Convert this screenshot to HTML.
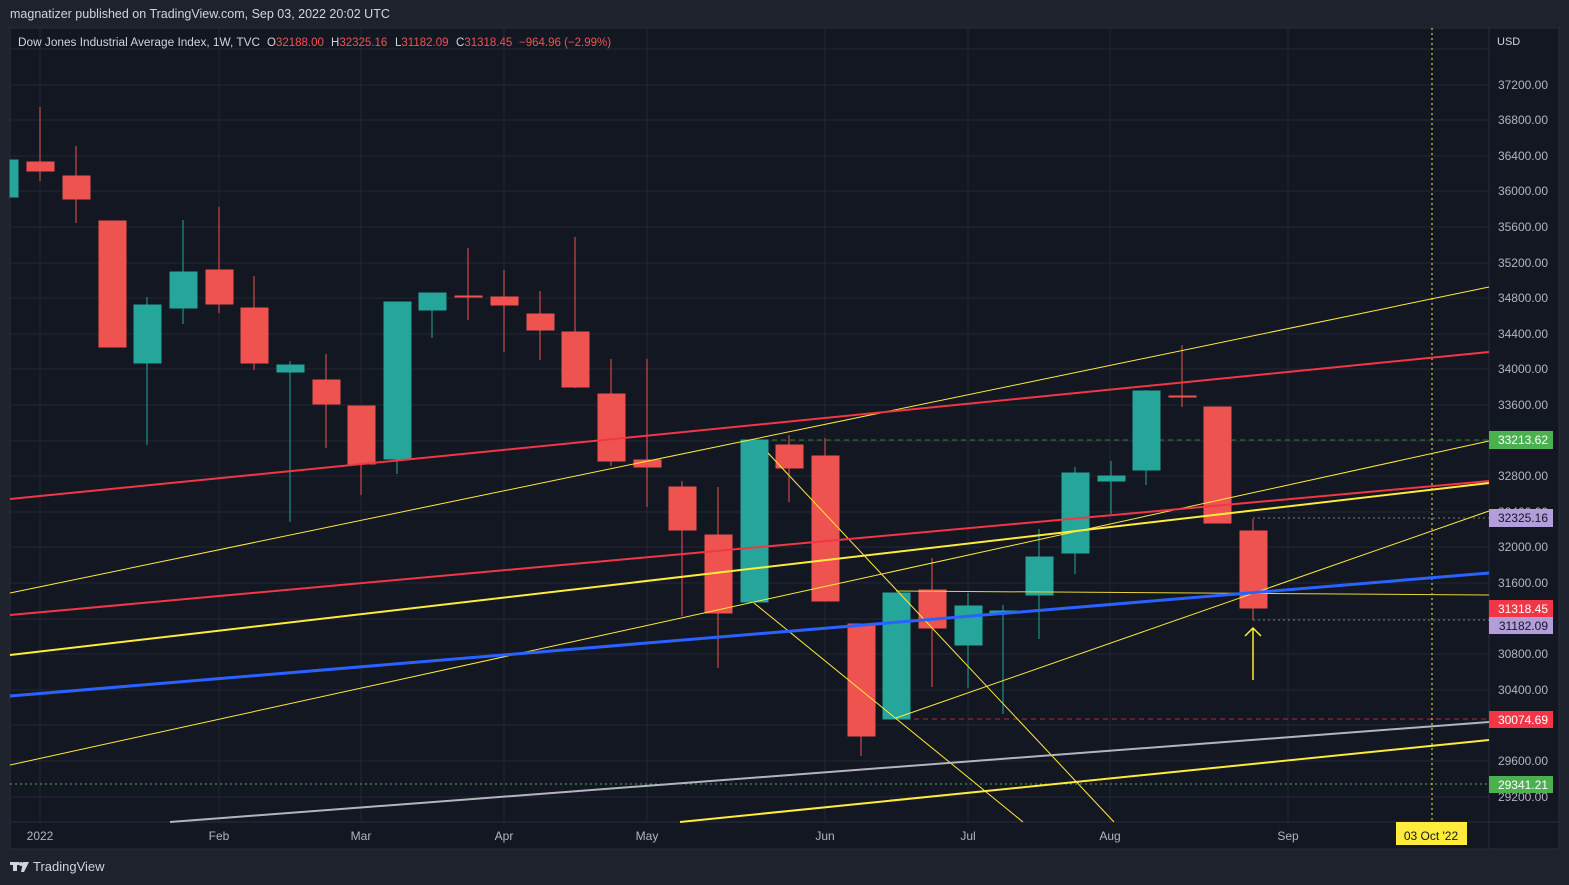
<!DOCTYPE html>
<html><head><meta charset="utf-8"><style>
body{margin:0;width:1569px;height:885px;background:#1e222d;overflow:hidden;font-family:"Liberation Sans",sans-serif;position:relative}
.t{position:absolute;color:#d1d4dc;font-size:12px;white-space:nowrap}
</style></head><body>
<div class="t" style="left:10px;top:7px;font-size:12.5px">magnatizer published on TradingView.com, Sep 03, 2022 20:02 UTC</div>
<svg width="1569" height="885" style="position:absolute;left:0;top:0" font-family="Liberation Sans, sans-serif">
<rect x="10" y="28" width="1549" height="821" fill="#131722" stroke="#2a2e39"/>
<g stroke="#232733" stroke-width="1">
<line x1="10" x2="1489" y1="49" y2="49"/><line x1="10" x2="1489" y1="85" y2="85"/><line x1="10" x2="1489" y1="120" y2="120"/><line x1="10" x2="1489" y1="156" y2="156"/><line x1="10" x2="1489" y1="191" y2="191"/><line x1="10" x2="1489" y1="227" y2="227"/><line x1="10" x2="1489" y1="263" y2="263"/><line x1="10" x2="1489" y1="298" y2="298"/><line x1="10" x2="1489" y1="334" y2="334"/><line x1="10" x2="1489" y1="369" y2="369"/><line x1="10" x2="1489" y1="405" y2="405"/><line x1="10" x2="1489" y1="441" y2="441"/><line x1="10" x2="1489" y1="476" y2="476"/><line x1="10" x2="1489" y1="512" y2="512"/><line x1="10" x2="1489" y1="547" y2="547"/><line x1="10" x2="1489" y1="583" y2="583"/><line x1="10" x2="1489" y1="619" y2="619"/><line x1="10" x2="1489" y1="654" y2="654"/><line x1="10" x2="1489" y1="690" y2="690"/><line x1="10" x2="1489" y1="725" y2="725"/><line x1="10" x2="1489" y1="761" y2="761"/><line x1="10" x2="1489" y1="797" y2="797"/>
<line y1="28" y2="822" x1="40" x2="40"/><line y1="28" y2="822" x1="219" x2="219"/><line y1="28" y2="822" x1="361" x2="361"/><line y1="28" y2="822" x1="504" x2="504"/><line y1="28" y2="822" x1="647" x2="647"/><line y1="28" y2="822" x1="825" x2="825"/><line y1="28" y2="822" x1="968" x2="968"/><line y1="28" y2="822" x1="1110" x2="1110"/><line y1="28" y2="822" x1="1288" x2="1288"/>
</g>
<line x1="10" x2="1559" y1="822" y2="822" stroke="#2a2e39"/>
<line x1="1489" x2="1489" y1="28" y2="849" stroke="#2a2e39"/>
<line x1="754" x2="1489" y1="440" y2="440" stroke="#2e7d32" stroke-dasharray="5,4"/>
<line x1="896" x2="1489" y1="719" y2="719" stroke="#b22833" stroke-dasharray="5,4"/>
<line x1="1253" x2="1489" y1="518" y2="518" stroke="#787b86" stroke-dasharray="2,3"/>
<line x1="1253" x2="1489" y1="620" y2="620" stroke="#787b86" stroke-dasharray="2,3"/>
<line x1="10" x2="1489" y1="784" y2="784" stroke="#4caf50" stroke-dasharray="2,3"/>
<line x1="1432" x2="1432" y1="28" y2="822" stroke="#ffeb3b" stroke-dasharray="2,3"/>
<g stroke-width="1">
<g fill="#26a69a" stroke="#26a69a">
<rect x="10" y="160" width="8" height="37"/>
<line x1="147" x2="147" y1="297" y2="445"/><rect x="134" y="305" width="27" height="58"/>
<line x1="183" x2="183" y1="220" y2="324"/><rect x="170" y="272" width="27" height="36"/>
<line x1="290" x2="290" y1="361" y2="522"/><rect x="277" y="365" width="27" height="7"/>
<line x1="397" x2="397" y1="459" y2="474"/><rect x="384" y="302" width="27" height="157"/>
<line x1="432" x2="432" y1="293" y2="338"/><rect x="419" y="293" width="27" height="17"/>
<rect x="741" y="440" width="27" height="162"/>
<rect x="883" y="593" width="27" height="126"/>
<line x1="968" x2="968" y1="593" y2="688"/><rect x="955" y="606" width="27" height="39"/>
<line x1="1003" x2="1003" y1="605" y2="714"/><rect x="990" y="611" width="27" height="2"/>
<line x1="1039" x2="1039" y1="529" y2="639"/><rect x="1026" y="557" width="27" height="38"/>
<line x1="1075" x2="1075" y1="467" y2="574"/><rect x="1062" y="473" width="27" height="80"/>
<line x1="1111" x2="1111" y1="461" y2="514"/><rect x="1098" y="476" width="27" height="5"/>
<line x1="1146" x2="1146" y1="390" y2="485"/><rect x="1133" y="391" width="27" height="79"/>
</g>
<g fill="#ef5350" stroke="#ef5350">
<line x1="40" x2="40" y1="107" y2="181"/><rect x="27" y="162" width="27" height="9"/>
<line x1="76" x2="76" y1="146" y2="223"/><rect x="63" y="176" width="27" height="23"/>
<line x1="112" x2="112" y1="221" y2="347"/><rect x="99" y="221" width="27" height="126"/>
<line x1="219" x2="219" y1="207" y2="313"/><rect x="206" y="270" width="27" height="34"/>
<line x1="254" x2="254" y1="276" y2="370"/><rect x="241" y="308" width="27" height="55"/>
<line x1="326" x2="326" y1="354" y2="448"/><rect x="313" y="380" width="27" height="24"/>
<line x1="361" x2="361" y1="406" y2="495"/><rect x="348" y="406" width="27" height="58"/>
<line x1="468" x2="468" y1="248" y2="320"/><rect x="455" y="296" width="27" height="1"/>
<line x1="504" x2="504" y1="270" y2="352"/><rect x="491" y="297" width="27" height="8"/>
<line x1="540" x2="540" y1="291" y2="360"/><rect x="527" y="314" width="27" height="16"/>
<line x1="575" x2="575" y1="237" y2="388"/><rect x="562" y="332" width="27" height="55"/>
<line x1="611" x2="611" y1="359" y2="466"/><rect x="598" y="394" width="27" height="67"/>
<line x1="647" x2="647" y1="359" y2="507"/><rect x="634" y="460" width="27" height="7"/>
<line x1="682" x2="682" y1="481" y2="616"/><rect x="669" y="487" width="27" height="43"/>
<line x1="718" x2="718" y1="487" y2="668"/><rect x="705" y="535" width="27" height="78"/>
<line x1="789" x2="789" y1="435" y2="502"/><rect x="776" y="445" width="27" height="23"/>
<line x1="825" x2="825" y1="438" y2="601"/><rect x="812" y="456" width="27" height="145"/>
<line x1="861" x2="861" y1="736" y2="756"/><rect x="848" y="624" width="27" height="112"/>
<line x1="932" x2="932" y1="558" y2="687"/><rect x="919" y="590" width="27" height="38"/>
<line x1="1182" x2="1182" y1="345" y2="407"/><rect x="1169" y="396" width="27" height="1"/>
<rect x="1204" y="407" width="27" height="116"/>
<line x1="1253" x2="1253" y1="519" y2="620"/><rect x="1240" y="531" width="27" height="77"/>
</g></g>
<g fill="none">
<line x1="10" y1="593" x2="1489" y2="287" stroke="#ffeb3b" stroke-width="1"/>
<line x1="10" y1="765" x2="1489" y2="441" stroke="#ffeb3b" stroke-width="1"/>
<line x1="896" y1="718" x2="1489" y2="511" stroke="#ffeb3b" stroke-width="1"/>
<line x1="896" y1="591" x2="1489" y2="595" stroke="#e8d33a" stroke-width="1"/>
<line x1="768" y1="453" x2="1114" y2="822" stroke="#ffeb3b" stroke-width="1"/>
<line x1="754" y1="603" x2="1023" y2="822" stroke="#ffeb3b" stroke-width="1"/>
<line x1="10" y1="499" x2="1489" y2="352" stroke="#f23645" stroke-width="2"/>
<line x1="10" y1="615" x2="1489" y2="481" stroke="#f23645" stroke-width="2"/>
<line x1="10" y1="655" x2="1489" y2="483" stroke="#ffeb3b" stroke-width="2"/>
<line x1="10" y1="696" x2="1489" y2="573" stroke="#2962ff" stroke-width="3"/>
<line x1="170" y1="822" x2="1489" y2="722" stroke="#b2b5be" stroke-width="2"/>
<line x1="680" y1="822" x2="1489" y2="740" stroke="#ffeb3b" stroke-width="2"/>
<path d="M1253 680V628M1245 636l8-8 8 8" stroke="#ffeb3b" stroke-width="1.5"/>
</g>
<g fill="#b2b5be" font-size="12" text-anchor="end">
<text x="1548" y="89">37200.00</text><text x="1548" y="124">36800.00</text><text x="1548" y="160">36400.00</text><text x="1548" y="195">36000.00</text><text x="1548" y="231">35600.00</text><text x="1548" y="267">35200.00</text><text x="1548" y="302">34800.00</text><text x="1548" y="338">34400.00</text><text x="1548" y="373">34000.00</text><text x="1548" y="409">33600.00</text><text x="1548" y="480">32800.00</text><text x="1548" y="516">32400.00</text><text x="1548" y="551">32000.00</text><text x="1548" y="587">31600.00</text><text x="1548" y="658">30800.00</text><text x="1548" y="694">30400.00</text><text x="1548" y="765">29600.00</text><text x="1548" y="801">29200.00</text>
</g>
<rect x="1490" y="30" width="66" height="22" fill="#131722"/>
<text x="1497" y="45" fill="#d1d4dc" font-size="11">USD</text>
<g font-size="12" text-anchor="end">
<rect x="1489" y="431" width="64" height="18" fill="#4caf50"/><text x="1548" y="444" fill="#fff">33213.62</text>
<rect x="1489" y="509" width="64" height="18" fill="#b39ddb"/><text x="1548" y="522" fill="#131722">32325.16</text>
<rect x="1489" y="600" width="64" height="17" fill="#f23645"/><text x="1548" y="613" fill="#fff">31318.45</text>
<rect x="1489" y="617" width="64" height="17" fill="#b39ddb"/><text x="1548" y="630" fill="#131722">31182.09</text>
<rect x="1489" y="711" width="64" height="17" fill="#f23645"/><text x="1548" y="724" fill="#fff">30074.69</text>
<rect x="1489" y="776" width="64" height="17" fill="#4caf50"/><text x="1548" y="789" fill="#fff">29341.21</text>
</g>
<g fill="#b2b5be" font-size="12" text-anchor="middle">
<text x="40" y="840">2022</text><text x="219" y="840">Feb</text><text x="361" y="840">Mar</text><text x="504" y="840">Apr</text><text x="647" y="840">May</text><text x="825" y="840">Jun</text><text x="968" y="840">Jul</text><text x="1110" y="840">Aug</text><text x="1288" y="840">Sep</text>
</g>
<rect x="1396" y="822" width="71" height="23" fill="#ffeb3b"/>
<text x="1431" y="840" fill="#131722" font-size="12" text-anchor="middle">03 Oct '22</text>
<g font-size="11.5" fill="#d1d4dc">
<text x="18" y="46" textLength="242" lengthAdjust="spacingAndGlyphs">Dow Jones Industrial Average Index, 1W, TVC</text>
<text x="267" y="46">O<tspan fill="#ef5350">32188.00</tspan></text>
<text x="331" y="46">H<tspan fill="#ef5350">32325.16</tspan></text>
<text x="395" y="46">L<tspan fill="#ef5350">31182.09</tspan></text>
<text x="456" y="46">C<tspan fill="#ef5350">31318.45</tspan></text>
<text x="519" y="46" fill="#ef5350">−964.96 (−2.99%)</text>
</g>
<g fill="#d1d4dc"><rect x="10" y="862" width="9" height="3"/><rect x="13" y="862" width="4" height="9"/><circle cx="21" cy="864" r="2"/><path d="M23 862h6l-5 10h-3z"/></g>
<text x="33" y="871" font-size="13" fill="#d1d4dc">TradingView</text>
</svg>
</body></html>
